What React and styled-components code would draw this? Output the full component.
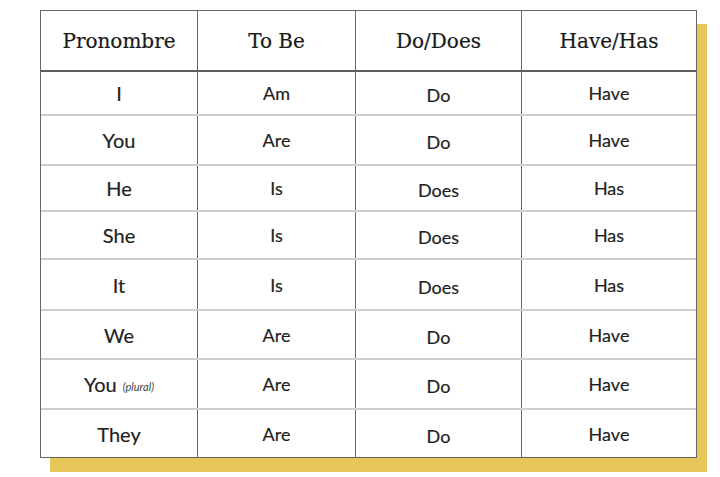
import React from 'react';
import styled, { createGlobalStyle } from 'styled-components';

const GlobalStyle = createGlobalStyle`
  html, body {
    margin: 0;
    padding: 0;
    background: #ffffff;
  }
  body {
    width: 720px;
    height: 477px;
    overflow: hidden;
  }
  *, *::before, *::after {
    box-sizing: border-box;
  }
`;

const Page = styled.div`
  padding: 10px 0 0 40px;
`;

const Card = styled.div`
  width: 657px;
  border: 1.5px solid #666;
  background: #fff;
  box-shadow: 10px 14px 0 0 #e6c658;
`;

const Row = styled.div`
  display: grid;
  grid-template-columns: 157px 158px 166px 1fr;
  height: ${props => props.h}px;
  border-bottom: ${props =>
    props.header ? '2px solid #5e5e5e' : props.last ? 'none' : '2px solid #cfcfcf'};
`;

const Cell = styled.div`
  display: flex;
  align-items: center;
  justify-content: center;
  padding-top: ${props => props.dy || 0}px;
  border-right: ${props => (props.last ? 'none' : '1.5px solid #6a6a6a')};
  font-family: ${props =>
    props.header ? '"DejaVu Serif", "Liberation Serif", serif' : 'Lato, "Open Sans", sans-serif'};
  font-size: ${props => (props.header ? 20 : props.big ? 20 : 18)}px;
  color: ${props => (props.header ? '#1a1a1a' : '#1f1f1f')};
  -webkit-text-stroke: 0.2px currentColor;
  white-space: nowrap;
`;

const Note = styled.span`
  font-style: italic;
  font-size: 11px;
  margin-left: 6px;
  margin-top: 4px;
  color: #444;
  -webkit-text-stroke: 0;
`;

const rows = [
  { h: 44, p: 'I', be: 'Am', d: 'Do', h2: 'Have' },
  { h: 50, p: 'You', be: 'Are', d: 'Do', h2: 'Have' },
  { h: 46, p: 'He', be: 'Is', d: 'Does', h2: 'Has' },
  { h: 48, p: 'She', be: 'Is', d: 'Does', h2: 'Has' },
  { h: 51, p: 'It', be: 'Is', d: 'Does', h2: 'Has' },
  { h: 49, p: 'We', be: 'Are', d: 'Do', h2: 'Have' },
  { h: 50, p: 'You', note: '(plural)', be: 'Are', d: 'Do', h2: 'Have' },
  { h: 47, p: 'They', be: 'Are', d: 'Do', h2: 'Have' },
];

export default function App() {
  return (
    <>
      <GlobalStyle />
      <Page>
        <Card>
          <Row header h={61}>
            <Cell header>Pronombre</Cell>
            <Cell header dy={-4}>To Be</Cell>
            <Cell header>Do/Does</Cell>
            <Cell header last>Have/Has</Cell>
          </Row>
          {rows.map((r, i) => (
            <Row key={i} h={r.h} last={i === rows.length - 1}>
              <Cell big>
                {r.p}
                {r.note && <Note>{r.note}</Note>}
              </Cell>
              <Cell>{r.be}</Cell>
              <Cell dy={4}>{r.d}</Cell>
              <Cell last>{r.h2}</Cell>
            </Row>
          ))}
        </Card>
      </Page>
    </>
  );
}
